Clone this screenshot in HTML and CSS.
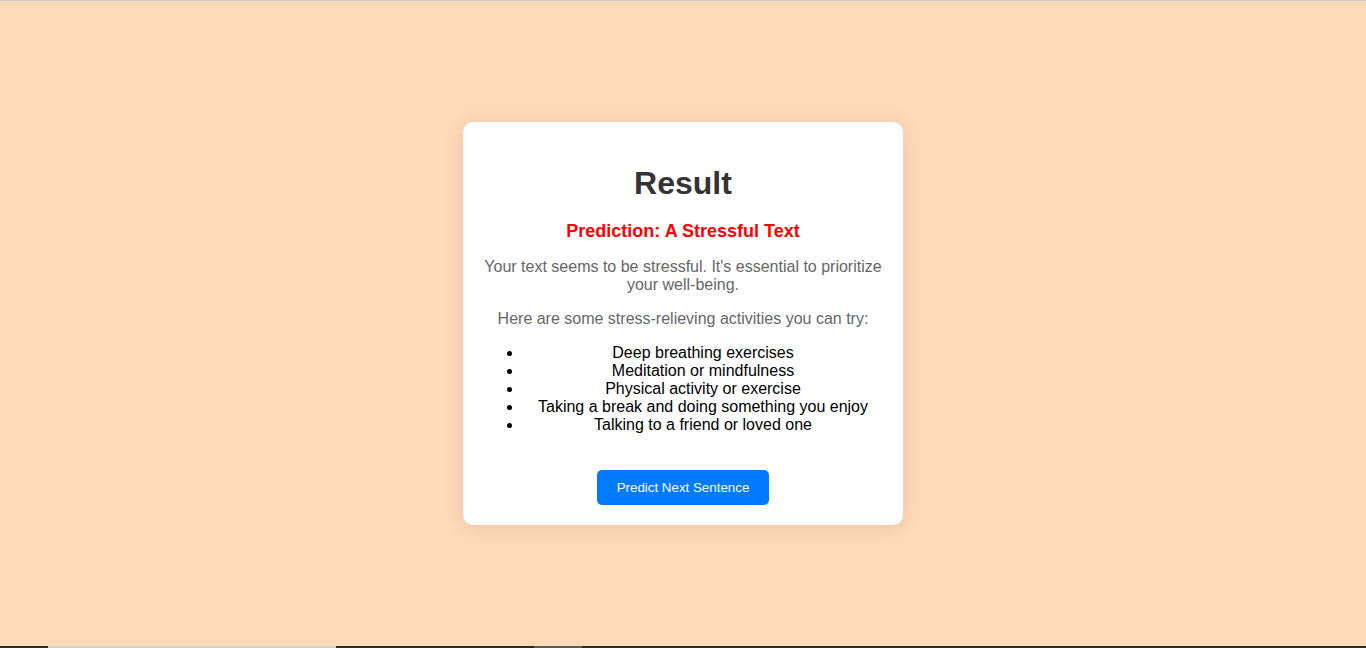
FILE: index.html
```html
<!DOCTYPE html>
<html lang="en">
<head>
<meta charset="utf-8">
<title>Result</title>
<link rel="stylesheet" href="styles.css">
</head>
<body>
<div class="top-line"></div>
<main class="stage">
  <div class="card">
    <h1 class="title">Result</h1>
    <h3 class="prediction">Prediction: A Stressful Text</h3>
    <p class="note">Your text seems to be stressful. It's essential to prioritize your well-being.</p>
    <p class="note">Here are some stress-relieving activities you can try:</p>
    <ul class="tips">
      <li>Deep breathing exercises</li>
      <li>Meditation or mindfulness</li>
      <li>Physical activity or exercise</li>
      <li>Taking a break and doing something you enjoy</li>
      <li>Talking to a friend or loved one</li>
    </ul>
    <button class="btn" type="button">Predict Next Sentence</button>
  </div>
</main>
<div class="taskbar">
  <span class="seg seg-dark1"></span>
  <span class="seg seg-light"></span>
  <span class="seg seg-dark2"></span>
  <span class="seg seg-gray"></span>
  <span class="seg seg-rest"></span>
</div>
</body>
</html>
```
FILE: styles.css
```css
html, body {
  margin: 0;
  padding: 0;
  height: 100%;
}
body {
  display: flex;
  flex-direction: column;
  background: #ffdab9;
  font-family: "Liberation Sans", Arial, sans-serif;
  overflow: hidden;
}
.top-line {
  height: 1px;
  background: #c9c9cc;
  flex: none;
}
.stage {
  flex: 1;
  display: flex;
  align-items: center;
  justify-content: center;
}
.card {
  width: 400px;
  padding: 20px;
  background: #fff;
  border-radius: 10px;
  box-shadow: 0 2px 20px rgba(0, 0, 0, 0.1);
  text-align: center;
}
.title {
  font-size: 32px;
  color: #333;
  margin: 23px 0 0;
}
.prediction {
  font-size: 18px;
  color: #ff0000;
  margin: 19px 0 16px;
}
.note {
  font-size: 16px;
  color: #666;
  margin: 16px 0;
}
.tips {
  font-size: 16px;
  color: #000;
  margin: 16px 0;
  padding-left: 40px;
}
.btn {
  margin-top: 20px;
  padding: 10px 20px;
  background: #007bff;
  color: #fff;
  border: none;
  border-radius: 5px;
  font-family: "Liberation Sans", Arial, sans-serif;
  font-size: 13.333px;
  cursor: pointer;
}
.taskbar {
  flex: none;
  height: 2px;
  display: flex;
}
.seg { display: block; height: 2px; }
.seg-dark1 { width: 48px; background: #2b2b2b; }
.seg-light { width: 288px; background: #d0d0d0; }
.seg-dark2 { width: 198px; background: #2b2b2b; }
.seg-gray { width: 48px; background: #5a5a5a; }
.seg-rest { flex: 1; background: #2b2b2b; }
```
